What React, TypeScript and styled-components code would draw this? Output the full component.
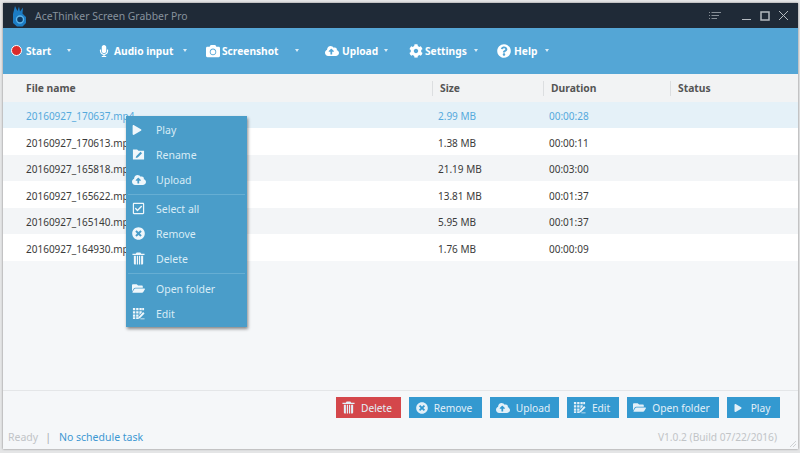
import React from "react";
import styled, { createGlobalStyle } from "styled-components";
import { FaCamera, FaCloudUploadAlt, FaCog, FaFolderOpen, FaMicrophone, FaPlay, FaQuestionCircle, FaRegCheckSquare, FaTimesCircle } from "react-icons/fa";

const GlobalStyle = createGlobalStyle`
    html, body {
        margin: 0;
        width: 800px;
        height: 453px;
        overflow: hidden;
        background: #e4e5e6;
        font-family: "Noto Sans", "Open Sans", sans-serif;
    }
`;

const Page = styled.div`
    width: 800px;
    height: 453px;
    padding: 3px 2px 4px 3px;
    box-sizing: border-box;
`;

const Window = styled.div`
    position: relative;
    height: 100%;
    display: flex;
    flex-direction: column;
    background: #f5f7f9;
    box-shadow: 0 0 2px rgba(0, 0, 0, .45);
`;

const TitleBar = styled.div`
    height: 25px;
    flex: none;
    display: flex;
    align-items: center;
    padding: 0 9px 0 10px;
    background: #1f2a37;
    color: #87929d;
    font-size: 10.4px;
`;

const Title = styled.span`
    margin-left: 8px;
`;

const WindowControls = styled.div`
    margin-left: auto;
    display: flex;
    align-items: center;
    gap: 8px;
    color: #b4bac0;
`;

const ListIcon = styled.svg`
    margin-right: 13px;
`;

const Toolbar = styled.div`
    height: 46px;
    flex: none;
    display: flex;
    align-items: center;
    padding-bottom: 1px;
    box-sizing: border-box;
    background: #54a6d6;
    color: #fff;
    font-size: 10.2px;
    font-weight: 700;
`;

const ToolItem = styled.div<{ $width: number; $gap: number }>`
    width: ${p => p.$width}px;
    flex: none;
    display: flex;
    align-items: center;
    gap: ${p => p.$gap}px;
    padding-left: 8px;
    box-sizing: border-box;
`;

const Caret = styled.span<{ $gap: number }>`
    margin-left: ${p => p.$gap}px;
    width: 0;
    height: 0;
    border-left: 2.5px solid transparent;
    border-right: 2.5px solid transparent;
    border-top: 3.5px solid #dcedf7;
`;

const RecordDot = styled.span`
    width: 9px;
    height: 9px;
    border-radius: 50%;
    background: #dc2a2a;
    border: 1px solid #fff;
`;

const Row = styled.div<{ $kind?: "head" | "active" | "odd" | "even" }>`
    display: grid;
    grid-template-columns: 429px 111px 127px 1fr;
    height: ${p => (p.$kind === "head" ? 27.5 : 26.5)}px;
    padding-top: ${p => (p.$kind === "head" ? 2 : 4)}px;
    box-sizing: border-box;
    flex: none;
    align-items: center;
    font-size: ${p => (p.$kind === "head" ? 10.3 : 10)}px;
    font-weight: ${p => (p.$kind === "head" ? 700 : 400)};
    color: ${p => (p.$kind === "head" ? "#555" : p.$kind === "active" ? "#55a9dc" : "#3a3a3a")};
    background: ${p =>
        p.$kind === "head" ? "#f2f3f4" : p.$kind === "active" ? "#e5f1f8" : p.$kind === "even" ? "#f3f5f7" : "#fff"};
`;

const Cell = styled.div<{ $first?: boolean; $divider?: boolean }>`
    padding-left: ${p => (p.$first ? 22 : p.$divider ? 7 : 5)}px;
    height: 15px;
    line-height: 15px;
    border-left: ${p => (p.$divider ? "1px solid #dcdee0" : "1px solid transparent")};
`;

const Spacer = styled.div`
    flex: 1;
`;

const Actions = styled.div`
    display: flex;
    justify-content: flex-end;
    gap: 8px;
    padding: 6px 18px 0 0;
    box-sizing: border-box;
    border-top: 1px solid #e4e6e8;
    height: 30px;
    flex: none;
`;

const ActionButton = styled.div<{ $danger?: boolean; $width: number; $gap?: number }>`
    width: ${p => p.$width}px;
    height: 21px;
    padding-right: 3px;
    box-sizing: border-box;
    display: flex;
    align-items: center;
    justify-content: center;
    gap: ${p => p.$gap ?? 6}px;
    color: #e3f0f8;
    font-size: 10.2px;
    background: ${p => (p.$danger ? "#d4474b" : "#3399d0")};
`;

const StatusBar = styled.div`
    height: 29px;
    flex: none;
    display: flex;
    align-items: center;
    padding: 4px 21px 0 5px;
    box-sizing: border-box;
    font-size: 10.5px;
    color: #c1c4c7;
`;

const StatusLink = styled.span`
    color: #3d97d3;
`;

const Separator = styled.span`
    margin: 0 8px 0 7px;
    color: #a8abae;
`;

const Version = styled.span`
    margin-left: auto;
    font-size: 10.2px;
`;

const Grip = styled.svg`
    position: absolute;
    right: 1px;
    bottom: 1px;
`;

const Menu = styled.div`
    position: absolute;
    left: 123px;
    top: 113px;
    width: 121px;
    height: 211px;
    padding-top: 1px;
    box-sizing: border-box;
    background: #4a9dc9;
    color: #d8ecf6;
    font-size: 10.5px;
    box-shadow: 1px 2px 3px rgba(0, 0, 0, .45);
`;

const MenuItem = styled.div`
    height: 25px;
    display: flex;
    align-items: center;
`;

const MenuIcon = styled.span`
    width: 30px;
    padding-left: 6px;
    box-sizing: border-box;
    display: flex;
    color: #f0f7fb;
`;

const MenuLine = styled.div<{ $low?: boolean }>`
    height: 1px;
    margin: 2px 2px ${p => (p.$low ? 2 : 1)}px;
    background: #66aed3;
`;

const EditIcon = () => (
    <svg width="13" height="13" viewBox="0 0 14 14" fill="currentColor">
        <path d="M1 1h2.500v2.500H1zM4.500 1H7v2.500H4.500zM8 1h2.500v2.500H8zM11 1h2v2.500h-2zM1 4.500h2.500V7H1zM4.500 4.500H7V7H4.500zM8 4.500h2.500V6L8 8.500zM1 8h2.500v2.500H1zM4.500 8H7v2.500H4.500zM1 11h2.500v2H1zM4.500 11H7v2H4.500z" />
        <path d="M12 5.500l1.500 1.500-5 5-2 .7.7-2zM9 12.500h4.500v.8H9z" />
    </svg>
);

const RenameIcon = () => (
    <svg width="13" height="13" viewBox="0 0 14 14" fill="currentColor">
        <path fillRule="evenodd" d="M1 1.500h4.500L7 3h6v9.500H1zM4 10.800l2.200-.5 4.600-4.600-1.600-1.600-4.700 4.700z" />
    </svg>
);

const TrashIcon = ({ size = 13 }: { size?: number }) => (
    <svg width={size} height={size} viewBox="0 0 14 14" fill="currentColor">
        <path d="M5 .5h4l1 1.500h3.500v1.200H.5V2H4zM2 4h2.200v9.500H3q-1 0-1-1zM5.200 4h1.300v9.500H5.200zM7.500 4h1.300v9.500H7.500zM9.800 4H12v8.500q0 1-1 1H9.800z" />
    </svg>
);

const files = [
    ["20160927_170637.mp4", "2.99 MB", "00:00:28"],
    ["20160927_170613.mp4", "1.38 MB", "00:00:11"],
    ["20160927_165818.mp4", "21.19 MB", "00:03:00"],
    ["20160927_165622.mp4", "13.81 MB", "00:01:37"],
    ["20160927_165140.mp4", "5.95 MB", "00:01:37"],
    ["20160927_164930.mp4", "1.76 MB", "00:00:09"],
];

export default function App() {
    return (
        <Page>
            <GlobalStyle />
            <Window>
                <TitleBar>
                    <svg width="14" height="22" viewBox="0 0 14 22">
                        <path d="M2 1l2.500 5L6 1.500l1 5 3-4-.5 6 3.500 3.500v6l-3.500 3.500H4l-4-3.500V9z" fill="#1c7cc4" />
                        <circle cx="7" cy="14.500" r="3.500" fill="#0e3b66" stroke="#5ab4ea" strokeWidth="1.400" />
                    </svg>
                    <Title>AceThinker Screen Grabber Pro</Title>
                    <WindowControls>
                        <ListIcon width="12" height="10" viewBox="0 0 12 10" stroke="currentColor" strokeOpacity=".7">
                            <path d="M0 1.500h1M2.500 1.500H12M0 4.500h1M2.500 4.500H10M0 7.500h1M2.500 7.500H8" />
                        </ListIcon>
                        <svg width="10" height="10" viewBox="0 0 10 10" stroke="currentColor">
                            <path d="M0 8.500h9" />
                        </svg>
                        <svg width="10" height="10" viewBox="0 0 10 10" fill="none" stroke="currentColor" strokeWidth="1.500">
                            <rect x="1" y="1" width="8" height="8" />
                        </svg>
                        <svg width="11" height="11" viewBox="0 0 11 11" stroke="currentColor">
                            <path d="M1 1l9 9M10 1l-9 9" />
                        </svg>
                    </WindowControls>
                </TitleBar>
                <Toolbar>
                    <ToolItem $width={87} $gap={4}><RecordDot />Start<Caret $gap={12} /></ToolItem>
                    <ToolItem $width={108} $gap={4}><FaMicrophone size={12} />Audio input<Caret $gap={6} /></ToolItem>
                    <ToolItem $width={119} $gap={2}><FaCamera size={14} />Screenshot<Caret $gap={14} /></ToolItem>
                    <ToolItem $width={84} $gap={3}><FaCloudUploadAlt size={14} />Upload<Caret $gap={3} /></ToolItem>
                    <ToolItem $width={88} $gap={2}><FaCog size={14} />Settings<Caret $gap={5} /></ToolItem>
                    <ToolItem $width={80} $gap={3}><FaQuestionCircle size={14} />Help<Caret $gap={5} /></ToolItem>
                </Toolbar>
                <Row $kind="head">
                    <Cell $first>File name</Cell>
                    <Cell $divider>Size</Cell>
                    <Cell $divider>Duration</Cell>
                    <Cell $divider>Status</Cell>
                </Row>
                {files.map((f, i) => (
                    <Row key={f[0]} $kind={i === 0 ? "active" : i % 2 ? "odd" : "even"}>
                        <Cell $first>{f[0]}</Cell>
                        <Cell>{f[1]}</Cell>
                        <Cell>{f[2]}</Cell>
                        <Cell />
                    </Row>
                ))}
                <Spacer />
                <Actions>
                    <ActionButton $danger $width={65}><TrashIcon />Delete</ActionButton>
                    <ActionButton $width={73}><FaTimesCircle size={12} />Remove</ActionButton>
                    <ActionButton $width={69}><FaCloudUploadAlt size={14} />Upload</ActionButton>
                    <ActionButton $width={52}><EditIcon />Edit</ActionButton>
                    <ActionButton $width={92}><FaFolderOpen size={13} />Open folder</ActionButton>
                    <ActionButton $width={53} $gap={9}><FaPlay size={8} />Play</ActionButton>
                </Actions>
                <StatusBar>
                    Ready<Separator>|</Separator><StatusLink>No schedule task</StatusLink>
                    <Version>V1.0.2 (Build 07/22/2016)</Version>
                </StatusBar>
                <Grip width="8" height="8" viewBox="0 0 8 8" stroke="#cfd2d4">
                    <path d="M7 1L1 7M7 4L4 7" />
                </Grip>
                <Menu>
                    <MenuItem><MenuIcon><FaPlay size={10} /></MenuIcon>Play</MenuItem>
                    <MenuItem><MenuIcon><RenameIcon /></MenuIcon>Rename</MenuItem>
                    <MenuItem><MenuIcon><FaCloudUploadAlt size={14} /></MenuIcon>Upload</MenuItem>
                    <MenuLine />
                    <MenuItem><MenuIcon><FaRegCheckSquare size={13} /></MenuIcon>Select all</MenuItem>
                    <MenuItem><MenuIcon><FaTimesCircle size={13} /></MenuIcon>Remove</MenuItem>
                    <MenuItem><MenuIcon><TrashIcon /></MenuIcon>Delete</MenuItem>
                    <MenuLine $low />
                    <MenuItem><MenuIcon><FaFolderOpen size={13} /></MenuIcon>Open folder</MenuItem>
                    <MenuItem><MenuIcon><EditIcon /></MenuIcon>Edit</MenuItem>
                </Menu>
            </Window>
        </Page>
    );
}
